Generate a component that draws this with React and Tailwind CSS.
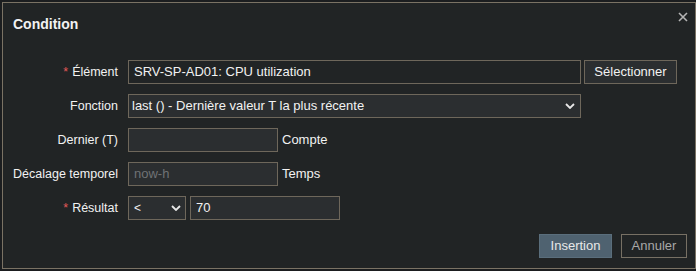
import React from "react";

function Label({ children, req }) {
  return (
    <div className="w-[115px] mr-[6px] shrink-0 text-right whitespace-nowrap text-[12.5px] text-[#f2f2f2]">
      {req && <span className="text-[#e45959] mr-1">*</span>}
      {children}
    </div>
  );
}

function Chevron() {
  return (
    <svg width="10" height="6" viewBox="0 0 10 6" className="shrink-0">
      <path d="M1 1 L5 5 L9 1" stroke="#e8e8e8" strokeWidth="1.8" fill="none" />
    </svg>
  );
}

export default function App() {
  return (
    <div
      className="w-[696px] h-[271px] bg-[#1b1d1f] overflow-hidden pt-[2px] pl-[2px]"
      style={{ fontFamily: '"Liberation Sans", Arial, sans-serif' }}
    >
      <div className="relative w-[694px] h-[267px] border border-[#7a7264] bg-[#212425] text-[13px] text-[#f2f2f2]">
        <div className="pl-[10px] pt-[13px] text-[14px] font-bold text-[#f2f2f2] leading-[16px]">Condition</div>
        <svg width="10" height="10" viewBox="0 0 10 10" className="absolute right-[7px] top-[9px]">
          <path d="M1 1 L9 9 M9 1 L1 9" stroke="#b5b5b5" strokeWidth="1.6" />
        </svg>

        <div className="mt-[28px] flex flex-col gap-[10px]">
          <div className="flex items-center h-[24px] gap-[4px]">
            <Label req>Élément</Label>
            <div className="w-[453px] h-[24px] border border-[#6e675b] bg-[#212425] flex items-center px-[5px] text-[#f2f2f2]">
              SRV-SP-AD01: CPU utilization
            </div>
            <div className="w-[93px] h-[24px] border border-[#6e675b] bg-[#2b2e30] flex items-center justify-center text-[#f2f2f2] -ml-[1px]">
              Sélectionner
            </div>
          </div>
          <div className="flex items-center h-[24px] gap-[4px]">
            <Label>Fonction</Label>
            <div className="w-[453px] h-[24px] border border-[#6e675b] bg-[#2b2e30] flex items-center justify-between pl-[3px] pr-[5px]">
              <span>last () - Dernière valeur T la plus récente</span>
              <Chevron />
            </div>
          </div>
          <div className="flex items-center h-[24px] gap-[4px]">
            <Label>Dernier (T)</Label>
            <div className="w-[150px] h-[24px] border border-[#6e675b] bg-[#2b2e30]"></div>
            <span>Compte</span>
          </div>
          <div className="flex items-center h-[24px] gap-[4px]">
            <Label>Décalage temporel</Label>
            <div className="w-[150px] h-[24px] border border-[#6e675b] bg-[#2b2e30] flex items-center px-[5px] text-[#6f7275]">
              now-h
            </div>
            <span>Temps</span>
          </div>
          <div className="flex items-center h-[24px] gap-[4px]">
            <Label req>Résultat</Label>
            <div className="w-[58px] h-[24px] border border-[#6e675b] bg-[#2b2e30] flex items-center justify-between pl-[5px] pr-[4px]">
              <span className="text-[12px]">&lt;</span>
              <Chevron />
            </div>
            <div className="w-[150px] h-[24px] border border-[#6e675b] bg-[#2b2e30] flex items-center px-[5px]">
              70
            </div>
          </div>
        </div>

        <div className="mt-[14px] flex justify-end gap-[9px] pr-[8px]">
          <div className="w-[73px] h-[24px] bg-[#4f6270] border border-[#5a6e7c] flex items-center justify-center text-[#e8e8e8]">
            Insertion
          </div>
          <div className="w-[66px] h-[24px] border border-[#777064] flex items-center justify-center text-[#a8a8a8]">
            Annuler
          </div>
        </div>
      </div>
    </div>
  );
}
